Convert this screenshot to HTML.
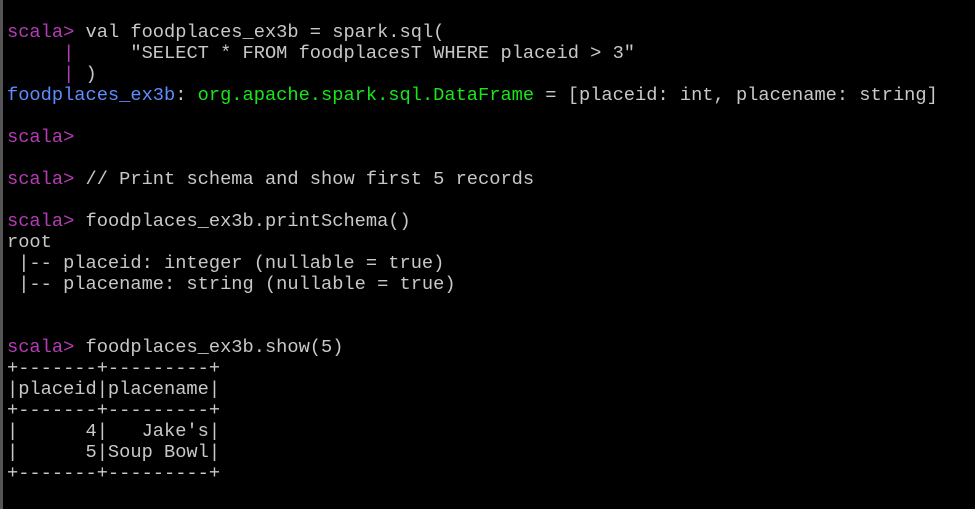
<!DOCTYPE html>
<html><head><meta charset="utf-8"><style>
html,body{margin:0;padding:0;background:#000;width:975px;height:509px;overflow:hidden}
.l{position:absolute;left:0;top:0;width:3px;height:509px;background:#555}
pre{margin:0;position:absolute;left:7px;top:22px;font-family:"Liberation Mono",monospace;font-size:18.7px;line-height:21px;color:#c8c8c8;white-space:pre}
.p{color:#b43cb4}.b{color:#5f8cff}.g{color:#19e619}
</style></head><body><div class="l"></div>
<pre><span class="p">scala&gt;</span> val foodplaces_ex3b = spark.sql(
     <span class="p">|</span>     "SELECT * FROM foodplacesT WHERE placeid &gt; 3"
     <span class="p">|</span> )
<span class="b">foodplaces_ex3b</span>: <span class="g">org.apache.spark.sql.DataFrame</span> = [placeid: int, placename: string]

<span class="p">scala&gt;</span>

<span class="p">scala&gt;</span> // Print schema and show first 5 records

<span class="p">scala&gt;</span> foodplaces_ex3b.printSchema()
root
 |-- placeid: integer (nullable = true)
 |-- placename: string (nullable = true)


<span class="p">scala&gt;</span> foodplaces_ex3b.show(5)
+-------+---------+
|placeid|placename|
+-------+---------+
|      4|   Jake's|
|      5|Soup Bowl|
+-------+---------+
</pre></body></html>
